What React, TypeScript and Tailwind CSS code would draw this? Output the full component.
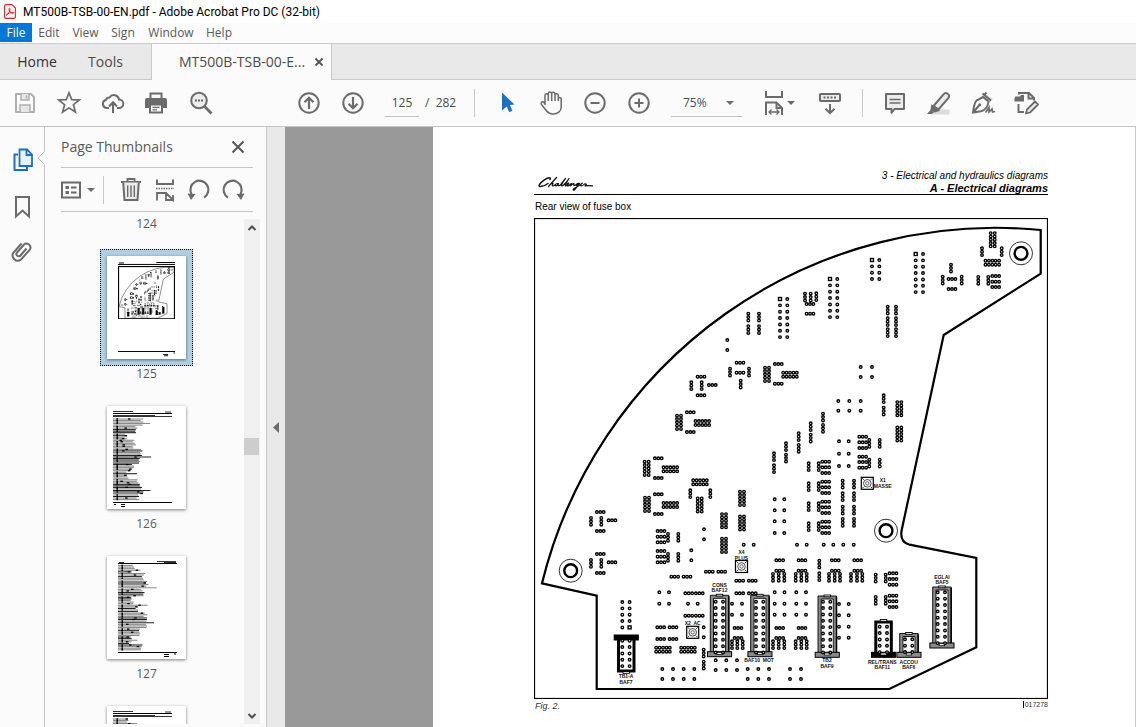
import React from "react";

type IconProps = { children: React.ReactNode; className?: string };

/* Icons share one 26px canvas with its origin in the middle. */
function Icon({ children, className = "" }: IconProps) {
  return (
    <svg
      viewBox="-13 -13 26 26"
      className={`size-[26px] shrink-0 ${className}`}
      fill="none"
      stroke="currentColor"
      strokeWidth="2"
      aria-hidden="true"
    >
      {children}
    </svg>
  );
}

function Caret() {
  return (
    <svg viewBox="0 0 8 4" className="h-1 w-2 shrink-0" fill="#6b6b6b" aria-hidden="true">
      <path d="M0 0H8L4 4Z" />
    </svg>
  );
}

function ToolButton({ label, children, className = "w-11" }: { label: string; children: React.ReactNode; className?: string }) {
  return (
    <button type="button" aria-label={label} className={`flex h-full shrink-0 items-center justify-center ${className}`}>
      {children}
    </button>
  );
}

/* ---------- title, menus, tabs ---------- */

function TitleBar() {
  return (
    <header className="flex h-[23px] shrink-0 items-center gap-[7px] bg-white pl-1">
      <svg viewBox="0 0 12 15" className="h-[15px] w-3" fill="none" stroke="#c9302c" aria-hidden="true">
        <path d="M2 .6H8L11.4 4V13a1.4 1.4 0 0 1-1.4 1.4H2A1.4 1.4 0 0 1 .6 13V2A1.4 1.4 0 0 1 2 .6Z" fill="#fdf1f0" strokeWidth="1.1" />
        <path d="M2.6 11.2C4.4 10.4 6 7.4 6 5.2c0-1.3-1-1.3-1 0 0 2 2 4 4 4.1 1.200 0 1-1 0-1C7 8.400 3.800 9.500 2.900 10.400c-.6.6-.5 1-.3.8Z" strokeWidth="1" />
      </svg>
      <h1 className="text-xs text-black [font-family:Roboto,'Open_Sans',sans-serif]">MT500B-TSB-00-EN.pdf - Adobe Acrobat Pro DC (32-bit)</h1>
    </header>
  );
}

function MenuBar() {
  return (
    <nav className="flex h-5 shrink-0 items-start bg-[#fcfcfc] text-xs text-[#5a5a5a]">
      <button type="button" className="h-[19px] w-8 bg-[#0078d7] text-white">File</button>
      <button type="button" className="h-[19px] w-[34px]">Edit</button>
      <button type="button" className="h-[19px] w-[39px]">View</button>
      <button type="button" className="h-[19px] w-9">Sign</button>
      <button type="button" className="h-[19px] w-[60px]">Window</button>
      <button type="button" className="h-[19px] w-9">Help</button>
    </nav>
  );
}

function TabBar() {
  return (
    <div className="flex h-[37px] shrink-0 border-t border-[#c9c9c9] bg-[#e9e9e9] text-sm text-[#4b4b4b]">
      <div className="flex w-[151px] border-b border-[#c9c9c9]">
        <button type="button" className="w-[74px] text-[#333]">Home</button>
        <button type="button" className="w-[63px]">Tools</button>
      </div>
      <div className="flex w-[181px] items-center justify-between border-x border-[#c9c9c9] bg-[#fbfbfb] pr-[7px] pl-[27px]">
        <span className="whitespace-nowrap">MT500B-TSB-00-E...</span>
        <button type="button" aria-label="Close tab">
          <svg viewBox="0 0 10 10" className="size-[10px]" stroke="#555" strokeWidth="1.8" aria-hidden="true">
            <path d="M1.500 1.500 8.500 8.500M8.500 1.500 1.500 8.500" />
          </svg>
        </button>
      </div>
      <div className="flex-1 border-b border-[#c9c9c9]" />
    </div>
  );
}

/* ---------- main toolbar ---------- */

function Separator() {
  return <div className="h-7 w-px shrink-0 bg-[#c8c8c8]" />;
}

function Toolbar() {
  return (
    <div className="flex h-[47px] shrink-0 items-center border-b border-[#c6c6c6] bg-[#fbfbfb] pl-[3px] text-[#6b6b6b]">
      <ToolButton label="Save">
        <Icon className="text-[#b0b0b0]">
          <path d="M-9 -9H6L9 -6V9H-9Z" strokeLinejoin="round" />
          <path d="M-4 -9V-3H4V-9" fill="#e6e6e6" strokeWidth="1.500" />
          <path d="M1.500 -7.500V-4.500" strokeWidth="1.500" />
          <path d="M-5 9V2H5V9" fill="#e6e6e6" strokeWidth="1.500" />
        </Icon>
      </ToolButton>
      <ToolButton label="Add to favourites">
        <Icon><path d="M0 -10.200 2.700 -3.300 10.300 -3 4.400 1.700 6.400 9 0 4.900 -6.400 9 -4.400 1.700 -10.300 -3 -2.700 -3.300Z" strokeWidth="1.700" /></Icon>
      </ToolButton>
      <ToolButton label="Upload to cloud">
        <Icon>
          <path d="M-4 5H-6.500A4.200 4.200 0 0 1 -7 -3.200A3.500 3.500 0 0 1 -3.500 -5.500A5.200 5.200 0 0 1 6 -3.600A4.300 4.300 0 0 1 6 5H4" />
          <path d="M0 10V0M-4 3.500 0 -.7 4 3.500" />
        </Icon>
      </ToolButton>
      <ToolButton label="Print">
        <Icon>
          <path d="M-6.500 -5V-9.500H4.500V-5" />
          <path d="M-10 -5H8A2 2 0 0 1 10 -3V5H6V1H-8V5H-12V-3A2 2 0 0 1 -10 -5Z" fill="currentColor" stroke="none" />
          <path d="M-7 1.500H5V9.500H-7Z" fill="#fbfbfb" />
          <path d="M-4.500 4.300H2.500M-4.500 6.800H0" strokeWidth="1.300" />
        </Icon>
      </ToolButton>
      <ToolButton label="Find">
        <Icon>
          <circle cx="-2" cy="-2.500" r="7.800" fill="#ececec" />
          <path d="M3.600 3.400 10.500 10.500" strokeWidth="2.800" />
          <path d="M-6 -2.500h2M-3 -2.500h2M0 -2.500h2" />
        </Icon>
      </ToolButton>

      <div className="w-16 shrink-0" />
      <ToolButton label="Previous page">
        <Icon><circle r="9.700" /><path d="M0 6V-5M-4.500 -.8 0 -5.300 4.500 -.8" strokeWidth="2.200" /></Icon>
      </ToolButton>
      <ToolButton label="Next page">
        <Icon><circle r="9.700" /><path d="M0 -6V5M-4.500 .8 0 5.300 4.500 .8" strokeWidth="2.200" /></Icon>
      </ToolButton>
      <input
        aria-label="Page number"
        defaultValue="125"
        className="ml-[10px] h-7 w-[34px] shrink-0 border-b border-[#c0c0c0] bg-transparent text-center text-xs text-[#4b4b4b]"
      />
      <span className="w-[55px] shrink-0 pl-[6px] text-xs whitespace-pre text-[#4b4b4b]">/  282</span>
      <Separator />
      <div className="w-[10px] shrink-0" />
      <ToolButton label="Select">
        <Icon className="text-[#1f70c1]">
          <path d="M-5 -10.500 7.500 1.500 2.800 2 5.400 7.800 2.200 9.200 -.2 3.500 -5 7.500Z" fill="currentColor" stroke="none" />
        </Icon>
      </ToolButton>
      <ToolButton label="Hand">
        <Icon>
          <path d="M-6 2V-7.500A1.600 1.600 0 0 1 -2.700 -7.500V-2M-2.700 -7.500V-9.200A1.600 1.600 0 0 1 .700 -9.200V-2M.700 -9A1.600 1.600 0 0 1 4 -9V-2M4 -7.500A1.600 1.600 0 0 1 7.300 -7.500V-2M7.300 -4.500A1.500 1.500 0 0 1 10.200 -4.500V4C10.200 8.500 6.500 11 2.500 11C-1.500 11 -3.500 9.500 -5.200 7L-9.500 1.500C-10.800 -.5 -8.600 -2 -7.200 -.6L-5.500 1.500" strokeWidth="1.500" />
        </Icon>
      </ToolButton>
      <ToolButton label="Zoom out">
        <Icon><circle r="9.700" /><path d="M-4.500 0H4.500" /></Icon>
      </ToolButton>
      <ToolButton label="Zoom in">
        <Icon><circle r="9.700" /><path d="M-4.500 0H4.500M0 -4.500V4.500" /></Icon>
      </ToolButton>
      <div className="relative ml-[10px] w-[71px] shrink-0">
        <select
          aria-label="Zoom level"
          defaultValue="75%"
          className="h-7 w-full appearance-none border-b border-[#c0c0c0] bg-transparent pl-3 text-xs text-[#4b4b4b]"
        >
          <option>50%</option>
          <option>75%</option>
          <option>100%</option>
        </select>
        <span className="pointer-events-none absolute inset-y-0 right-2 flex items-center"><Caret /></span>
      </div>
      <ToolButton label="Fit width" className="ml-3 w-[47px]">
        <Icon>
          <path d="M-8 -12V-6H8V-12" />
          <path d="M-8 12V-.5H2.500L8 5V12M2.500 -.5V5H8" />
          <path d="M-4.500 9H4.500M-2.500 6.500 -5 9 -2.500 11.500M2.500 6.500 5 9 2.500 11.500" strokeWidth="1.300" />
        </Icon>
        <Caret />
      </ToolButton>
      <ToolButton label="Scrolling mode" className="ml-[7px] w-11">
        <Icon>
          <rect x="-10" y="-9" width="20" height="7" rx=".8" fill="#ececec" />
          <path d="M-6.500 -5.500H7" strokeDasharray="2 1.500" />
          <path d="M0 1V10M-4.500 5.800 0 10.200 4.500 5.800" />
        </Icon>
      </ToolButton>
      <div className="w-[10px] shrink-0" />
      <Separator />
      <div className="w-[10px] shrink-0" />
      <ToolButton label="Comment">
        <Icon>
          <path d="M-9 -9H9V6H-.5L-3.500 9.800V6H-9Z" fill="#ececec" strokeLinejoin="round" />
          <path d="M-5.500 -3.500H5.500M-5.500 0H5.500" strokeWidth="1.300" />
        </Icon>
      </ToolButton>
      <ToolButton label="Highlight">
        <Icon>
          <path d="M-3 6.500H10.500V11.500H-8Z" fill="#dcdcdc" stroke="none" />
          <path d="M-5.500 3 4.500 -8.500A2.800 2.800 0 0 1 9.500 -5L-.5 6.500Z" fill="#ececec" />
          <path d="M-7 3 -1 7.500 -4 8.500 -7.500 7Z" fill="currentColor" />
          <path d="M-12 11 -8.500 7 -5 9.500 -7.500 11Z" fill="currentColor" stroke="none" />
        </Icon>
      </ToolButton>
      <ToolButton label="Sign">
        <Icon>
          <path d="M2 -9 10 -4 7 -.5 -1 -7Z" fill="#dcdcdc" stroke="none" />
          <path d="M-10 9.500C-9.500 5 -8.500 0 -6.500 -2.500L0 -6 5.500 -1.500C5 4 2.500 7 -2 8.200ZM-9.500 9 -4 2.500" />
          <path d="M-.5 -9.500 8 -2.500M1 -7.500 3.500 -10.500" />
          <circle cx="-3.300" cy="1.800" r="1.500" fill="currentColor" stroke="none" />
          <path d="M2.500 9.500 6 4.500 6 9 9 6 9.500 9 12 8.500" strokeWidth="1.700" />
        </Icon>
      </ToolButton>
      <ToolButton label="Fill and edit">
        <Icon>
          <path d="M-11.500 -6.500H-7L-6 -8H-3V-1.500H-12.500V-5Z" fill="currentColor" stroke="none" />
          <path d="M-8 -8.500V-10H2L7 -5V-2.500M1.500 -10V-4.500H7M-8.500 1V9H-3" />
          <path d="M-1 10.500 0 6.500 8 -1.500 11 1.500 3 9.500Z" fill="#ececec" strokeWidth="1.800" strokeLinejoin="round" />
        </Icon>
      </ToolButton>
    </div>
  );
}

/* ---------- fuse box drawing ---------- */

type Pt = [number, number];

const hTriples: Pt[] = [
  [740, 362.7], [740, 372.7], [778.3, 364], [778.3, 383.7], [701, 376.7], [712.3, 385], [701, 395.3],
  [690.3, 412.3], [690.3, 432], [810, 304], [810, 313.7], [952, 279], [952, 289],
  [995.7, 276], [995.7, 281.7], [995.7, 287],
  [862.7, 436.7], [862.7, 442.3], [862.7, 448], [862.7, 456.7], [862.7, 462], [862.7, 467.7],
  [825.7, 461.7], [825.7, 467.3], [825.7, 473], [825.7, 481.7], [825.7, 487.3], [825.7, 493],
  [825.7, 501.7], [825.7, 507.3], [825.7, 513], [825.7, 521.7], [825.7, 527.3], [825.7, 533],
  [658.3, 458.3], [658.3, 478], [658.3, 494.3], [658.3, 514],
  [600.3, 512], [612, 520.3], [600.3, 531], [600.3, 554], [612, 562.3], [600.3, 573],
  [661, 531], [661, 536.7], [661, 542.3], [661, 551], [661, 556.7], [661, 562.3],
  [674.7, 576.7], [687, 576.7], [709.3, 571.7], [721.7, 571.7], [739.7, 580.7], [752.3, 580.7],
  [779.7, 560.3], [779.7, 570.7], [802, 560.3], [802, 570.7], [835.3, 560.3], [835.3, 570.7], [857.7, 560.3], [857.7, 570.7],
  [893, 573.3], [893, 579], [893, 584.7], [893, 595.7], [893, 601.3], [893, 607],
  [688.7, 593.3], [699.3, 593.3], [688.7, 615.7], [699.3, 615.7],
  [660.7, 627.3], [673, 627.3], [660.7, 639], [673, 639], [739.7, 593.3], [752.3, 593.3],
  [738, 628], [738, 638], [779.7, 628], [779.7, 638], [802, 628], [802, 638],
];

const vTriples: Pt[] = [
  [748.3, 317], [748.3, 329.5], [759, 317], [759, 329.5], [730, 372], [749, 372], [740.7, 384],
  [691.3, 385.7], [701.7, 385.7], [805, 297], [810.7, 297], [816.3, 296.7],
  [951, 268], [942.7, 280], [961.7, 280], [982, 251.7], [1001.7, 251.7], [978.3, 280.3], [988.3, 280.3],
  [887.7, 310], [887.7, 321.7], [887.7, 332.7], [896, 310], [896, 321.7], [896, 332.7],
  [883.7, 398.7], [883.7, 411], [823, 417], [823, 428.3], [810.7, 426.7], [810.7, 438],
  [798.7, 436.7], [798.7, 448.3], [786, 446.7], [786, 458], [774, 456.7], [774, 468.7],
  [869.3, 443.3], [879.7, 443.3], [869.3, 463], [879.7, 463],
  [808.7, 466.7], [818.7, 466.7], [808.7, 486.7], [818.7, 486.7], [808.7, 506.7], [818.7, 506.7], [808.7, 526.7], [818.7, 526.7],
  [842.7, 484], [842.7, 496.7], [842.7, 510], [842.7, 522.3], [854, 484], [854, 496.7], [854, 510], [854, 522.3],
  [690.3, 493.7], [710.3, 493.7], [591, 521.3], [601.3, 521.3], [591, 563.3], [601.3, 563.3],
  [668, 537.3], [678.3, 537.3], [668, 557.3], [678.3, 557.3],
  [773, 577.3], [778.7, 577.3], [784.3, 577.3], [795.7, 577.3], [801.3, 577.3], [806.7, 577.3],
  [819.3, 564], [819.3, 576.7], [829, 577.3], [834.7, 577.3], [840, 577.3], [851, 577.3], [857, 577.3], [862.3, 577.3],
  [875.7, 578], [885.7, 578], [875.7, 600.3], [885.7, 600.3], [703.7, 653], [703.7, 665],
  [732, 644.7], [737.3, 644.7], [742.7, 644.7], [773, 644.7], [778.7, 644.7], [784.3, 644.7], [795.7, 644.7], [801.3, 644.7], [806.7, 644.7],
];

const hBlocks: Pt[] = [
  [790, 374.7], [702.3, 423], [992.3, 262.7], [670.3, 469.3], [670.3, 505], [700, 482.3], [663, 649.7], [688, 649.7],
];

const vBlocks: Pt[] = [
  [767, 374.3], [679, 422.3], [992.7, 239.7], [899.3, 408.7], [899.3, 434], [646.7, 468.3], [647, 504.3],
  [699.7, 505], [742, 498.3], [742, 523], [724, 520.7], [724, 545.3],
];

/* Loose contacts, as columns crossed with rows. */
const lattices: [number[], number[]][] = [
  [[727.3], [340, 350]], [[860.7, 872], [367, 377]], [[838.3, 849.3, 860.7], [401, 410.7]],
  [[839, 848.7], [441.3, 453.7, 466]], [[797, 806.7, 823.7, 833.3, 843.3, 853.7, 743.7, 753.7], [544.7]],
  [[774.7, 784.3], [499.3, 510.3, 521.3, 533]], [[704], [529.3, 539.3]], [[691.3], [550.3, 560.3]],
  [[659.3, 669], [592.3, 603.7]], [[688, 697.7], [603.7]], [[703.7], [627.3, 637.3]],
  [[732, 742], [603.7, 614.7]], [[774.7, 784.5, 796.3, 806], [592.3, 603.7, 614.7]],
  [[839, 848.7], [604, 615.3, 626.7, 637.7]], [[662.3, 673, 683.7, 694.3], [669, 679]],
  [[715.7, 726.3, 737], [660.3, 670]], [[747.7, 758.3, 769, 790, 801], [669, 679]],
];

/* Two-column headers: x, y of the first contact, number of rows, which contact is square. */
const headers: [number, number, number, number][] = [
  [780, 299, 7, 0], [830, 279, 7, 0], [872, 260, 4, 0], [915.7, 254, 7, 0], [622.3, 602, 5, 9],
  [622.3, 640.7, 5, -1], [715.7, 601.7, 9, -1], [756, 601.7, 9, -1], [823, 601.7, 9, -1],
  [879.7, 626.7, 5, -1], [905, 639.3, 3, -1], [937.7, 592.3, 9, -1],
];

/* Connector housings: left edge, top, bottom, flange side, heavy outline. */
const housings: { x: number; top: number; bottom: number; flange: "top" | "bottom"; heavy: boolean }[] = [
  { x: 617, top: 635, bottom: 672.5, flange: "top", heavy: true },
  { x: 710.3, top: 595.3, bottom: 656.7, flange: "bottom", heavy: false },
  { x: 750.7, top: 595.3, bottom: 656.7, flange: "bottom", heavy: false },
  { x: 818, top: 596, bottom: 657.3, flange: "bottom", heavy: false },
  { x: 874.3, top: 620.5, bottom: 657.3, flange: "bottom", heavy: true },
  { x: 899.7, top: 633.5, bottom: 657.3, flange: "bottom", heavy: false },
  { x: 932.7, top: 587, bottom: 648, flange: "bottom", heavy: false },
];

const labels: [number, number, string][] = [
  [882.7, 482, "X1"], [882.7, 487.5, "MASSE"], [741.5, 554, "X4"], [741.5, 559.5, "PLUS"], [692.7, 625, "X2  AC"],
  [719.5, 586.5, "CONS"], [719.5, 592, "BAF12"], [759, 662, "BAF10  MOT"], [626, 678, "TB1-A"], [626, 683.5, "BAF7"],
  [827, 662, "TB2"], [827, 667.5, "BAF9"], [882.3, 663.5, "REL/TRANS"], [882.3, 669, "BAF11"],
  [908.7, 663.5, "ACCOU"], [908.7, 669, "BAF6"], [942, 578.5, "EGLAI"], [942, 584, "BAF5"],
];

const sockets: Pt[] = [[867.3, 483.3], [741.5, 566.5], [692.7, 632.3]];
const rings: Pt[] = [[1021, 253.3], [886, 530.7], [570.7, 570.7]];

function block([cx, cy]: Pt, cols: number, rows: number, dx: number, dy: number): Pt[] {
  const out: Pt[] = [];
  for (let c = 0; c < cols; c++)
    for (let r = 0; r < rows; r++) out.push([cx + (c - (cols - 1) / 2) * dx, cy + (r - (rows - 1) / 2) * dy]);
  return out;
}

const contacts: Pt[] = [
  ...hTriples.flatMap((p) => block(p, 3, 1, 3.4, 0)),
  ...vTriples.flatMap((p) => block(p, 1, 3, 0, 3.4)),
  ...hBlocks.flatMap((p) => block(p, 5, 2, 3.4, 4)),
  ...vBlocks.flatMap((p) => block(p, 2, 5, 4, 3.3)),
  ...lattices.flatMap(([xs, ys]) => xs.flatMap((x) => ys.map((y): Pt => [x, y]))),
];

function FuseBox({ small = false, className }: { small?: boolean; className: string }) {
  const k = small ? 10 : 1;
  return (
    <svg viewBox="534 218 514 481" className={className} fill="none" stroke="#000" role="img" aria-label="Rear view of fuse box">
      <rect x={534 + k / 2} y={218 + k / 2} width={514 - k} height={481 - k} strokeWidth={small ? 10 : 1.2} />
      <path
        d="M542 583.3A467 467 0 0 1 1040.700 230V273.700L943.700 335 901.500 531C900.500 538 903 543 909.500 544.700L976.300 558V647.300L889.300 689H596.700V595.700Z"
        strokeWidth={small ? 4 : 2.2}
      />
      {housings.map(({ x, top, bottom, flange, heavy }) => {
        const w = 18.500;
        const c = heavy ? "#000" : "#8a8a8a";
        const fy = flange === "top" ? top : bottom - 5;
        const tabY = flange === "top" ? bottom : top;
        return (
          <g key={x}>
            <rect x={x + 1.500} y={top + 1.500} width={w - 3} height={bottom - top - 3} stroke={c} strokeWidth="3" fill={small ? "#000" : "#fff"} />
            <rect x={x - 2.800} y={fy} width={w + 5.600} height="5" fill={c} stroke="#000" strokeWidth="1" />
            {!heavy && <path d={`M${x} ${fy}V${top}H${x + w}V${fy}M${x + 3.200} ${fy}V${top + 3}H${x + w - 3.200}V${fy}`} strokeWidth=".9" />}
            {!heavy && <path d={`M${x + w} ${top + 1}V${fy}`} strokeWidth="1.500" />}
            <rect x={x + 6} y={tabY - 1} width={w - 12} height="1.800" fill="#fff" strokeWidth=".9" />
            {flange === "bottom" && <rect x={x + 6.500} y={bottom - 4.300} width={w - 13} height="2" fill="#fff" strokeWidth=".7" />}
          </g>
        );
      })}
      <g strokeWidth={small ? 3 : 1.350} fill={small ? "#000" : "#fff"}>
        {contacts.map(([x, y], i) => (
          <circle key={i} cx={x} cy={y} r="1.300" />
        ))}
        {headers.flatMap(([x, y, rows, square]) =>
          Array.from({ length: rows * 2 }, (_, i) => {
            const cx = x + (i % 2) * 7.300;
            const cy = y + Math.floor(i / 2) * 6.350;
            return i === square ? (
              <rect key={`${x}-${y}-${i}`} x={cx - 1.500} y={cy - 1.500} width="3" height="3" />
            ) : (
              <circle key={`${x}-${y}-${i}`} cx={cx} cy={cy} r="1.300" />
            );
          }),
        )}
      </g>
      {rings.map(([x, y]) => (
        <g key={x}>
          <circle cx={x} cy={y} r="11.500" strokeWidth=".8" fill="#fff" />
          <circle cx={x} cy={y} r="6.400" strokeWidth="2.400" />
        </g>
      ))}
      {sockets.map(([x, y]) => (
        <g key={x}>
          <rect x={x - 6} y={y - 6} width="12" height="12" strokeWidth="1.200" fill="#fff" />
          <circle cx={x} cy={y} r="3.800" strokeWidth=".7" />
          <circle cx={x} cy={y} r="1.700" strokeWidth=".6" />
          <path d={`M${x - 5} ${y - 5}l1.500 1.500M${x + 5} ${y - 5}l-1.500 1.500M${x - 5} ${y + 5}l1.500 -1.500M${x + 5} ${y + 5}l-1.500 -1.500`} strokeWidth=".8" />
        </g>
      ))}
      {!small && (
        <g fill="#111" stroke="none" textAnchor="middle" className="text-[5px] font-bold [font-family:'Liberation_Sans',sans-serif]">
          {labels.map(([x, y, text]) => (
            <text key={`${x}-${y}`} x={x} y={y} className="whitespace-pre">{text}</text>
          ))}
        </g>
      )}
    </svg>
  );
}

/* ---------- thumbnails ---------- */

function FigureThumb() {
  return (
    <div className="flex h-full flex-col bg-white px-[11px] pt-[6px] pb-[2px]">
      <svg viewBox="0 0 58 4" className="w-full" stroke="#000" aria-hidden="true">
        <path d="M0 2.500H58M39 .5H58M1 1H6" strokeWidth="1" />
      </svg>
      <FuseBox small className="w-full" />
      <svg viewBox="0 0 58 6" className="mt-auto w-full" stroke="#000" aria-hidden="true">
        <path d="M0 .5H58" />
        <path d="M46 3.500H51M47 4.800H51M56.500 2H58" strokeWidth=".9" />
      </svg>
    </div>
  );
}

function ListThumb({ seed, offset, heading }: { seed: number; offset: number; heading: boolean }) {
  const rand = (i: number) => Math.abs(Math.sin((i + 1) * 12.9898 * seed) * 43758.5453) % 1;
  const rows = Array.from({ length: 54 }, (_, i) => {
    const group = Math.abs(Math.sin(Math.floor(i / 5) * 4.1 * seed + seed));
    return 9 + group * 18 + rand(i) * 4 + (i % 11 === 3 ? 9 : 0);
  });
  return (
    <svg viewBox="0 0 79 103" className="size-full bg-white" stroke="#000" fill="none" aria-hidden="true">
      <g transform={`translate(${offset} 0)`}>
        <path d="M0 7.500H59M0 96.500H59" />
        <path d={heading ? "M0 5.500H20M52 6H58M0 9.500H42M0 10.500H59" : "M39 5.500H58M46 6.500H58M1 6.500H6"} strokeWidth=".8" />
        {rows.map((w, i) => {
          const y = (heading ? 13 : 9.500) + i * (heading ? 1.520 : 1.590);
          return (
            <g key={i}>
              <path d={`M0 ${y}H${w}`} strokeWidth="1.100" stroke={rand(i + 60) > 0.7 ? "#222" : "#8a8a8a"} />
              {i % 5 !== 4 && <path d={`M3.500 ${y}h1.500`} strokeWidth="1.600" />}
              {rand(i + 90) > 0.6 && <path d={`M${6 + rand(i + 20) * (w - 8)} ${y}h2.500`} strokeWidth="1.300" />}
            </g>
          );
        })}
        <path d={heading ? "M1 98.500H3M8 98.500H12M8 100.500H12" : "M46 98.500H51M46 100.500H51M56 98H58"} />
      </g>
    </svg>
  );
}

function PageThumb({ number, selected = false, children }: { number?: number; selected?: boolean; children: React.ReactNode }) {
  return (
    <button type="button" aria-label={number ? undefined : "Next page"} className="flex shrink-0 flex-col items-center">
      <span className={selected ? "h-[117px] w-[93px] border border-dotted border-black bg-[#b0cfe3] p-[6px]" : "h-[117px] w-[93px] p-[7px]"}>
        <span className="block h-[103px] w-[79px] shadow-[0_1px_3px_rgba(0,0,0,0.5)]">{children}</span>
      </span>
      {number && <span className="text-xs">{number}</span>}
    </button>
  );
}

function ThumbnailPanel() {
  return (
    <aside className="flex w-[222px] shrink-0 flex-col border-r border-[#c6c6c6] bg-[#fbfbfb] text-[#5a5a5a]">
      <div className="mr-[13px] ml-4 flex h-[41px] shrink-0 items-center justify-between border-b border-[#c6c6c6] pr-2">
        <h2 className="text-sm">Page Thumbnails</h2>
        <button type="button" aria-label="Close panel">
          <svg viewBox="0 0 14 14" className="size-[14px]" stroke="#555" strokeWidth="2" aria-hidden="true">
            <path d="M1.500 1.500 12.500 12.500M12.500 1.500 1.500 12.500" />
          </svg>
        </button>
      </div>
      <div className="mr-[13px] ml-3 flex h-11 shrink-0 items-center pl-1 text-[#6b6b6b]">
        <ToolButton label="Options" className="-ml-[6px] w-[42px] gap-[3px]">
          <Icon>
            <rect x="-9" y="-7.500" width="18" height="15" />
            <path d="M-5.500 -2.500h3.500M-5.500 2.500h3.500" strokeWidth="3.200" />
            <path d="M0 -2.500h5.500M0 2.500h5.500" />
          </Icon>
          <Caret />
        </ToolButton>
        <div className="mr-[10px] ml-[6px]"><Separator /></div>
        <ToolButton label="Delete pages" className="w-[34px]">
          <Icon>
            <path d="M-10 -8H10M-3.500 -8.500V-11H3.500V-8.500" strokeWidth="1.800" />
            <path d="M-7.800 -7.500 -6.500 10H6.500L7.800 -7.500" fill="#ececec" />
            <path d="M-3.300 -4.500V7M0 -4.500V7M3.300 -4.500V7" strokeWidth="1.400" />
          </Icon>
        </ToolButton>
        <ToolButton label="Extract pages" className="w-[34px]">
          <Icon>
            <path d="M-8 -10.500V-6H8V-10.500" />
            <path d="M-9 -1.500H9" strokeDasharray="1.500 1" strokeWidth="1.500" />
            <path d="M-8 10.500V3H1L8 10V5M1 3V10H8" strokeWidth="1.800" />
          </Icon>
        </ToolButton>
        <ToolButton label="Rotate left" className="w-[34px]">
          <Icon>
            <path d="M-7.500 4A9 9 0 1 1 5 7.500" strokeWidth="2.200" />
            <path d="M-11.500 3.500 -3.500 4 -8 10Z" fill="currentColor" stroke="none" />
          </Icon>
        </ToolButton>
        <ToolButton label="Rotate right" className="w-[34px]">
          <Icon>
            <path d="M7.500 4A9 9 0 1 0 -5 7.500" strokeWidth="2.200" />
            <path d="M11.500 3.500 3.500 4 8 10Z" fill="currentColor" stroke="none" />
          </Icon>
        </ToolButton>
      </div>
      <div className="mr-[13px] -mt-px ml-4 h-px shrink-0 bg-[#c6c6c6]" />
      <div className="flex min-h-0 flex-1 pb-[3px]">
        <div className="flex min-w-0 flex-1 flex-col items-center gap-[17px] overflow-hidden pt-1 pl-1 text-xs">
          <span className="h-4 shrink-0">124</span>
          <PageThumb number={125} selected><FigureThumb /></PageThumb>
          <PageThumb number={126}><ListThumb seed={1.7} offset={6} heading /></PageThumb>
          <PageThumb number={127}><ListThumb seed={2.9} offset={11} heading={false} /></PageThumb>
          <PageThumb><ListThumb seed={3.3} offset={6} heading /></PageThumb>
        </div>
        <div className="mt-[7px] mr-[6px] flex w-4 shrink-0 flex-col items-center bg-[#f0f0f0]">
          <svg viewBox="0 0 16 18" className="h-[18px] w-4" fill="none" stroke="#505050" strokeWidth="2" aria-hidden="true"><path d="M4.500 11 8 7.500 11.500 11" /></svg>
          <div className="flex w-full flex-1 flex-col">
            <div className="grow-[201]" />
            <div className="h-[17px] w-[15px] bg-[#cdcdcd]" />
            <div className="grow-[252]" />
          </div>
          <svg viewBox="0 0 16 18" className="h-[18px] w-4" fill="none" stroke="#505050" strokeWidth="2" aria-hidden="true"><path d="M4.500 8 8 11.500 11.500 8" /></svg>
        </div>
      </div>
    </aside>
  );
}

function SideRail() {
  return (
    <nav className="relative flex w-[45px] shrink-0 flex-col items-center border-r border-[#c6c6c6] bg-[#fbfbfb] pt-[10px] text-[#6b6b6b]">
      <ToolButton label="Page thumbnails" className="h-[46px] max-h-[46px] w-11">
        <Icon className="text-[#1f70c1]">
          <path d="M-4 -5.500H-7.500V10H5V6.500" />
          <path d="M-2.500 -10.500H5L10 -5.500V6H-2.500ZM4.500 -10.500V-5H10" fill="#eaf3fb" strokeWidth="1.800" />
        </Icon>
      </ToolButton>
      <ToolButton label="Bookmarks" className="h-[46px] max-h-[46px] w-11">
        <Icon><path d="M-6 -9H7V10.500L.5 4.500 -6 10.500Z" /></Icon>
      </ToolButton>
      <ToolButton label="Attachments" className="h-[46px] max-h-[46px] w-11">
        <Icon>
          <path d="M4.500 -3.500 -1.500 3.500A2.300 2.300 0 0 1 -5 .5L2 -7.500A4 4 0 0 1 8 -2.500L-1 7.500A5.200 5.200 0 0 1 -8.500 .5L-.5 -8.500" />
        </Icon>
      </ToolButton>
      <svg viewBox="0 0 8 14" className="absolute top-6 -right-px h-[14px] w-2" aria-hidden="true">
        <path d="M8 0 1 7 8 14" fill="#fbfbfb" stroke="#c6c6c6" />
      </svg>
    </nav>
  );
}

/* ---------- document ---------- */

function ChallengerLogo() {
  return (
    <svg viewBox="0 0 56 16" className="h-4 w-14" fill="none" stroke="#111" strokeLinecap="round" strokeLinejoin="round" role="img" aria-label="Challenger">
      <path d="M13 3.500C14.500 1 11 1 7 4.200C2.500 7.500 .5 10.500 3.500 10.600C6.500 10.600 9 9 11 7.500" strokeWidth="1.500" />
      <path d="M19.500 1.500 11.500 10.500C13.500 7.800 16 6.500 16 7.600C16 8.500 14.500 10 16 10C17.500 10 18.500 7.500 20.500 7.500C18.500 7.300 17.500 10 19 10C20.500 10 21.500 7.500 21.500 7.500C20.500 9.500 21.500 10.300 23 9.300L28.500 2.500C26 6 23.500 9.800 25 9.900C26.500 9.800 31.500 3.500 32 2.500C30 5.500 27.500 9.500 28.500 9.900C30 10.100 32.500 7.200 31.500 7.100C30 7.300 29 10 31 9.900C32.500 9.800 33.500 7.500 34.500 7.500L33.500 9.900C35 8 37 7 37 8C36.500 9.500 37 10 38.500 9C40 7.500 41.500 7.100 41.500 7.500C40 7.300 38.500 9.500 40 9.700C41.500 9.500 42.500 7.300 42.500 7.300L38 13.500C36 15 35 13.500 38 12C41 10.500 45 7.500 45.500 7.100C44 7 43 9.900 44.500 9.900C46 9.800 47.500 8 48 7.700L49.500 8.200 48 9.900C50 9.600 53 9.500 55.500 9.900" strokeWidth="1.200" />
    </svg>
  );
}

function DocumentPage() {
  return (
    <article className="min-w-0 flex-1 overflow-hidden border-r border-[#c6c6c6] bg-white pt-[42px] pr-[87px] pl-[101px] text-[10px] text-black [font-family:'Liberation_Sans',sans-serif]">
      <div className="flex h-[26px] items-end justify-between border-b border-black">
        <div className="pb-[2px] pl-[3px]"><ChallengerLogo /></div>
        <div className="text-right leading-3 italic">
          <p>3 - Electrical and hydraulics diagrams</p>
          <p className="text-[11px] leading-3 font-bold">A - Electrical diagrams</p>
        </div>
      </div>
      <p className="pt-[5px] pb-1 pl-px leading-[14px]">Rear view of fuse box</p>
      <FuseBox className="block w-full" />
      <div className="flex justify-between pt-px pl-px leading-3 text-[#333]">
        <em className="text-[9px]">Fig. 2.</em>
        <span className="text-[7px] leading-[10px]"><span className="mr-px border-l border-black" />017278</span>
      </div>
    </article>
  );
}

export default function App() {
  return (
    <div className="flex h-screen flex-col overflow-hidden bg-white [font-family:'Open_Sans','Noto_Sans',sans-serif]">
      <TitleBar />
      <MenuBar />
      <TabBar />
      <Toolbar />
      <main className="flex min-h-0 flex-1">
        <SideRail />
        <ThumbnailPanel />
        <button type="button" aria-label="Collapse panel" className="flex w-[18px] shrink-0 items-center justify-center bg-[#e9e9e9]">
          <svg viewBox="0 0 6 11" className="h-[11px] w-[6px]" fill="#6b6b6b" aria-hidden="true"><path d="M6 0V11L0 5.500Z" /></svg>
        </button>
        <div className="flex min-w-0 flex-1 bg-[#999] pl-[148px]">
          <DocumentPage />
        </div>
      </main>
    </div>
  );
}
